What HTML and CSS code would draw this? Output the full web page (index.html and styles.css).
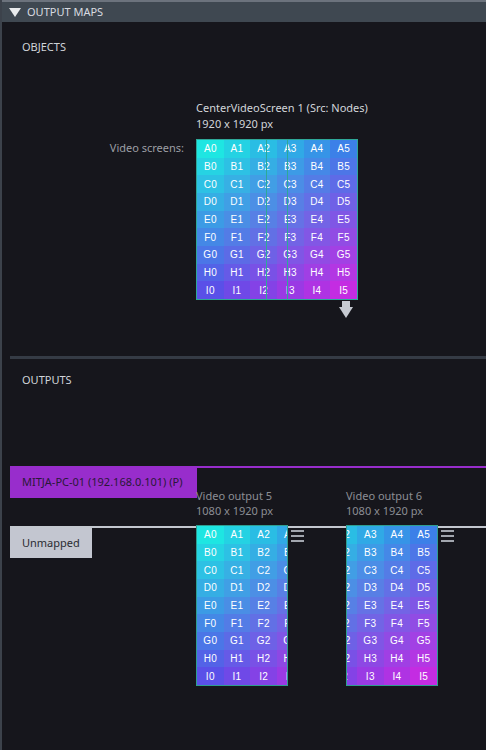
FILE: index.html
```html
<!DOCTYPE html>
<html lang="en">
<head>
<meta charset="utf-8">
<title>Output Maps</title>
<link rel="stylesheet" href="styles.css">
</head>
<body>
<div class="panel">
  <div class="panel-head">
    <svg class="caret" width="12" height="9" viewBox="0 0 12 9"><polygon points="0,0 12,0 6,9" fill="#e8eaec"/></svg>
    <span class="panel-title">OUTPUT MAPS</span>
  </div>
  <div class="panel-body">
    <section class="objects">
      <h2 class="sec-title">OBJECTS</h2>
      <div class="obj-row">
        <div class="obj-label">Video screens:</div>
        <div class="obj">
          <div class="obj-title">CenterVideoScreen 1 (Src: Nodes)<br>1920 x 1920 px</div>
          <div class="screen">
            <div class="grid framed" data-from="0" data-to="5"></div>
            <div class="region r5"></div>
            <div class="region r6"></div>
          </div>
          <svg class="down-arrow" width="14" height="17" viewBox="0 0 14 17"><rect x="3" y="0" width="8" height="7" fill="#c6cad2"/><polygon points="0,6 14,6 7,17" fill="#c6cad2"/></svg>
        </div>
      </div>
    </section>
    <div class="sep"></div>
    <section class="outputs">
      <h2 class="sec-title">OUTPUTS</h2>
      <div class="stage">
        <div class="host-row">
          <div class="host">MITJA-PC-01 (192.168.0.101) (P)</div>
          <div class="host-line"></div>
        </div>
        <div class="unmapped-row">
          <div class="unmapped">Unmapped</div>
        </div>
        <div class="out-list">
          <div class="output">
            <div class="out-label">Video output 5<br>1080 x 1920 px</div>
            <div class="out-body">
              <div class="viewport"><div class="grid" data-from="0" data-to="3"></div></div>
              <svg class="menu" width="13" height="12" viewBox="0 0 13 12"><rect x="0" y="0" width="13" height="2" fill="#a2a6ae"/><rect x="0" y="5" width="13" height="2" fill="#a2a6ae"/><rect x="0" y="10" width="13" height="2" fill="#a2a6ae"/></svg>
            </div>
          </div>
          <div class="output">
            <div class="out-label">Video output 6<br>1080 x 1920 px</div>
            <div class="out-body">
              <div class="viewport"><div class="grid shift" data-from="2" data-to="5"></div></div>
              <svg class="menu" width="13" height="12" viewBox="0 0 13 12"><rect x="0" y="0" width="13" height="2" fill="#a2a6ae"/><rect x="0" y="5" width="13" height="2" fill="#a2a6ae"/><rect x="0" y="10" width="13" height="2" fill="#a2a6ae"/></svg>
            </div>
          </div>
        </div>
      </div>
    </section>
  </div>
</div>
<script src="script.js"></script>
</body>
</html>
```

FILE: styles.css
```css
html, body {
  margin: 0;
  padding: 0;
  background: #16161c;
  overflow: hidden;
}
body {
  font-family: "Noto Sans", "Open Sans", sans-serif;
  font-size: 11px;
  color: #d2d5da;
  width: 486px;
  height: 750px;
}
.panel {
  border-left: 2px solid #3c424b;
  min-height: 750px;
  box-sizing: border-box;
}
.panel-head {
  display: flex;
  align-items: center;
  gap: 6px;
  height: 20px;
  border-top: 2px solid #6c737d;
  background: #3f4851;
  padding-left: 7px;
}
.caret { display: block; }
.panel-title {
  font-size: 11px;
  color: #d8dbe0;
  line-height: 16px;
}
.panel-body {
  padding-left: 8px;
}
.sec-title {
  margin: 0;
  font-size: 11px;
  font-weight: normal;
  line-height: 16px;
  color: #d0d4d9;
  padding-left: 12px;
}
.objects .sec-title { margin-top: 17px; }
.obj-row {
  display: flex;
  gap: 12px;
  margin-top: 45px;
  padding-left: 12px;
}
.obj-label {
  width: 162px;
  text-align: right;
  padding-top: 40px;
  line-height: 16px;
  color: #9c9ea4;
}
.obj {
  display: flex;
  flex-direction: column;
  align-items: flex-start;
}
.obj-title {
  line-height: 16px;
  color: #d2d5da;
  white-space: nowrap;
}
.screen {
  position: relative;
  margin-top: 7px;
}
.grid {
  display: grid;
  grid-auto-columns: 26.667px;
  grid-template-rows: repeat(9, 17.667px);
  height: 159px;
}
.grid.framed {
  border: 1px solid #2e9e90;
  width: 160px;
}
.grid.shift {
  margin-left: -16.667px;
}
.cell {
  display: flex;
  align-items: center;
  justify-content: center;
  font-family: "Liberation Sans", Arial, sans-serif;
  font-size: 10px;
  color: #ffffff;
  letter-spacing: 0.3px;
}
.region {
  position: absolute;
  top: 0;
  width: 92px;
  height: 161px;
  box-sizing: border-box;
  border: 1px solid #2ea898;
}
.region.r5 { left: 0; }
.region.r6 { left: 70px; }
.down-arrow {
  display: block;
  margin-top: 1px;
  margin-left: 143px;
}
.sep {
  height: 3px;
  margin-top: 38px;
  background: #353b45;
}
.outputs .sec-title { margin-top: 13px; }
.stage {
  display: grid;
  margin-top: 78px;
}
.stage > * {
  grid-area: 1 / 1;
  align-self: start;
}
.host-row {
  display: flex;
  height: 32px;
}
.host {
  width: 187px;
  flex: none;
  box-sizing: border-box;
  padding-left: 12px;
  line-height: 32px;
  background: #982dcc;
  color: #2a1838;
  white-space: nowrap;
}
.host-line {
  flex: 1;
  border-top: 2px solid #982dcc;
}
.unmapped-row {
  margin-top: 60px;
  border-top: 2px solid #c3c7cf;
}
.unmapped {
  width: 82px;
  height: 30px;
  box-sizing: border-box;
  padding-left: 12px;
  line-height: 30px;
  background: #c3c6d0;
  color: #2a2c32;
}
.out-list {
  display: flex;
  padding-left: 186px;
  padding-top: 22px;
}
.output {
  width: 150px;
  flex: none;
}
.out-label {
  line-height: 15px;
  color: #8c8e94;
  white-space: nowrap;
  margin-bottom: 7px;
}
.out-body {
  display: flex;
  align-items: flex-start;
  gap: 3px;
}
.viewport {
  width: 92px;
  height: 161px;
  box-sizing: border-box;
  border: 1px solid #2e9e90;
  overflow: hidden;
}
.menu {
  display: block;
  margin-top: 5px;
}
```

FILE: script.js
```js
(function () {
  var rows = 'ABCDEFGHI';
  var TL = [30, 230, 226], TR = [60, 128, 232], BL = [90, 80, 232], BR = [196, 44, 226];
  function mix(a, b, t) {
    return a.map(function (v, i) { return Math.round(v + (b[i] - v) * t); });
  }
  var grids = document.querySelectorAll('.grid');
  for (var g = 0; g < grids.length; g++) {
    var from = parseInt(grids[g].getAttribute('data-from'), 10);
    var to = parseInt(grids[g].getAttribute('data-to'), 10);
    for (var r = 0; r < 9; r++) {
      for (var c = from; c <= to; c++) {
        var top = mix(TL, TR, c / 5), bot = mix(BL, BR, c / 5), col = mix(top, bot, r / 8);
        var d = document.createElement('div');
        d.className = 'cell';
        d.style.background = 'rgb(' + col.join(',') + ')';
        d.style.gridRow = String(r + 1);
        d.style.gridColumn = String(c - from + 1);
        d.textContent = rows[r] + c;
        grids[g].appendChild(d);
      }
    }
  }
})();
```
